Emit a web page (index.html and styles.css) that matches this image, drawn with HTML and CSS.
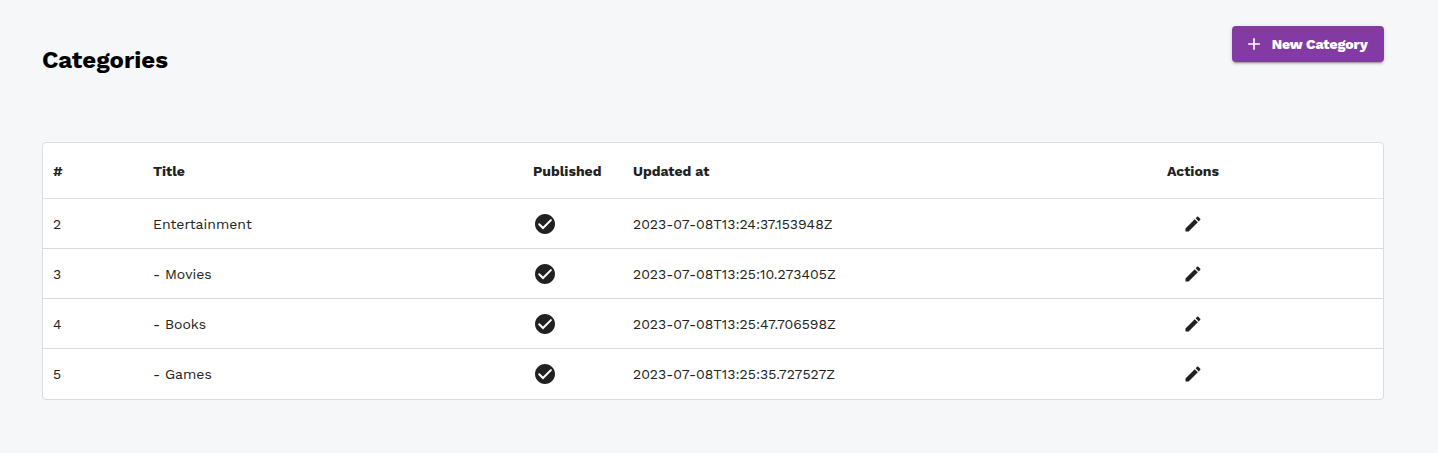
FILE: index.html
```html
<!DOCTYPE html>
<html lang="en">
<head>
<meta charset="utf-8">
<title>Categories</title>
<link rel="stylesheet" href="styles.css">
</head>
<body>
<svg width="0" height="0" class="sprite" aria-hidden="true">
  <symbol id="check" viewBox="0 0 24 24"><path d="M12 2C6.480 2 2 6.480 2 12s4.480 10 10 10 10-4.480 10-10S17.520 2 12 2z"/><path class="tick" d="M6.200 12.300l3.800 3.700 7.900-7.900"/></symbol>
  <symbol id="edit" viewBox="0 0 24 24"><path d="M3 17.250V21h3.750L17.810 9.940l-3.750-3.750L3 17.250zM20.710 7.040c.390-.390.390-1.020 0-1.410l-2.340-2.340a.996.996 0 0 0-1.410 0l-1.830 1.830 3.750 3.750 1.830-1.830z"/></symbol>
</svg>
<main class="page">
  <header class="header">
    <h1 class="title">Categories</h1>
    <button class="new-button"><svg class="plus" viewBox="0 0 24 24"><path d="M19 13h-6v6h-2v-6H5v-2h6V5h2v6h6v2z"/></svg><span class="label">New Category</span></button>
  </header>
  <section class="table">
    <div class="row head"><span>#</span><span>Title</span><span>Published</span><span>Updated at</span><span>Actions</span></div>
    <div class="row"><span>2</span><span>Entertainment</span><svg class="icon"><use href="#check"/></svg><span>2023-07-08T13:24:37.153948Z</span><svg class="icon edit"><use href="#edit"/></svg></div>
    <div class="row"><span>3</span><span>- Movies</span><svg class="icon"><use href="#check"/></svg><span>2023-07-08T13:25:10.273405Z</span><svg class="icon edit"><use href="#edit"/></svg></div>
    <div class="row"><span>4</span><span>- Books</span><svg class="icon"><use href="#check"/></svg><span>2023-07-08T13:25:47.706598Z</span><svg class="icon edit"><use href="#edit"/></svg></div>
    <div class="row"><span>5</span><span>- Games</span><svg class="icon"><use href="#check"/></svg><span>2023-07-08T13:25:35.727527Z</span><svg class="icon edit"><use href="#edit"/></svg></div>
  </section>
</main>
</body>
</html>
```
FILE: styles.css
```css
* { box-sizing: border-box; }
body { margin: 0; background: #f5f7f9; color: #212121; font: 14px/20px "Work Sans", Inter, sans-serif; }
.sprite { display: block; }
.tick { fill: none; stroke: #fff; stroke-width: 2; stroke-linecap: round; }
.page { padding: 26px 54px 0 42px; }
.header { display: flex; justify-content: space-between; align-items: flex-start; height: 116px; }
.title { margin: 19px 0 0; font-size: 24px; line-height: 30px; font-weight: 700; color: #000; }
.new-button { display: flex; align-items: center; gap: 7.7px; width: 152px; height: 36px; padding: 0 0 0 12px; border: 0; border-radius: 4px; background: #833aa3; color: #fff; font: 800 14px/20px "Work Sans", Inter, sans-serif; letter-spacing: -.08px; white-space: nowrap; box-shadow: 0 3px 1px -2px rgba(0,0,0,.2), 0 2px 2px rgba(0,0,0,.14), 0 1px 5px rgba(0,0,0,.12); }
.plus { width: 20px; height: 20px; fill: currentColor; }
.table { height: 258px; border: 1px solid #dadce0; border-radius: 4px; background: #fff; overflow: hidden; }
.row { display: grid; grid-template-columns: 100px 380px 100px 534px 1fr; align-items: center; height: 50px; padding-left: 10px; border-bottom: 1px solid #dadada; white-space: nowrap; }
.row:last-child { border-bottom: 0; }
.head { height: 56px; border-bottom-color: #e0e0e0; font-weight: 700; }
.icon { width: 24px; height: 24px; fill: #212121; }
.edit { width: 20px; height: 20px; margin-left: 16px; }
```
